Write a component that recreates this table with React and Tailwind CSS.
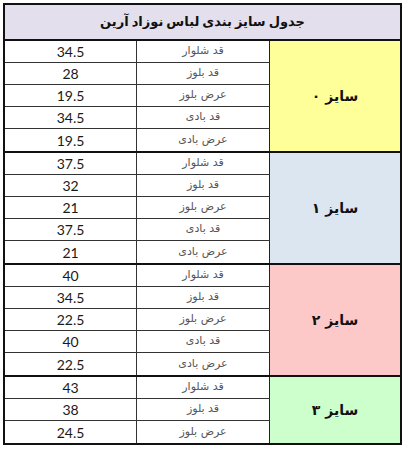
import React from 'react';

const groups = [
  {
    size: 'سایز ۰',
    bg: 'bg-[#ffff99]',
    rows: [
      ['قد شلوار', '34.5'],
      ['قد بلوز', '28'],
      ['عرض بلوز', '19.5'],
      ['قد بادی', '34.5'],
      ['عرض بادی', '19.5'],
    ],
  },
  {
    size: 'سایز ۱',
    bg: 'bg-[#dce6f1]',
    rows: [
      ['قد شلوار', '37.5'],
      ['قد بلوز', '32'],
      ['عرض بلوز', '21'],
      ['قد بادی', '37.5'],
      ['عرض بادی', '21'],
    ],
  },
  {
    size: 'سایز ۲',
    bg: 'bg-[#fcc8c8]',
    rows: [
      ['قد شلوار', '40'],
      ['قد بلوز', '34.5'],
      ['عرض بلوز', '22.5'],
      ['قد بادی', '40'],
      ['عرض بادی', '22.5'],
    ],
  },
  {
    size: 'سایز ۳',
    bg: 'bg-[#ccffcc]',
    rows: [
      ['قد شلوار', '43'],
      ['قد بلوز', '38'],
      ['عرض بلوز', '24.5'],
    ],
  },
];

const App = () => {
  return (
    <div className="w-[406px] h-[450px] bg-white p-[3px]">
      <div className="w-[399px] border-2 border-[#111] bg-white">
        {/* title */}
        <div
          dir="rtl"
          className="h-[36px] flex items-center justify-center bg-[#e4dfec] border-b-2 border-[#111] text-[13px] font-bold text-[#111] [word-spacing:-1.5px] font-['DejaVu_Sans',sans-serif]"
        >
          جدول سایز بندی لباس نوزاد آرین
        </div>

        {groups.map((g, gi) => (
          <div
            key={gi}
            className={`flex ${gi < groups.length - 1 ? 'border-b-2 border-[#111]' : ''}`}
          >
            <div className="w-[265px]">
              {g.rows.map(([label, value], ri) => (
                <div
                  key={ri}
                  className={`flex h-[22px] ${ri < g.rows.length - 1 ? 'border-b border-[#333]' : ''}`}
                >
                  <div className="w-[132px] border-r border-[#333] flex items-center justify-center text-[14px] text-[#1a1a1a] font-['Lato',sans-serif]">
                    {value}
                  </div>
                  <div
                    dir="rtl"
                    className="w-[133px] border-r border-[#222] flex items-center justify-center text-[11px] text-[#555] font-['DejaVu_Sans',sans-serif]"
                  >
                    {label}
                  </div>
                </div>
              ))}
            </div>
            <div
              dir="rtl"
              className={`flex-1 flex items-center justify-center ${g.bg} text-[14px] font-bold text-[#111] font-['DejaVu_Sans',sans-serif]`}
            >
              {g.size}
            </div>
          </div>
        ))}
      </div>
    </div>
  );
};

export default App;
